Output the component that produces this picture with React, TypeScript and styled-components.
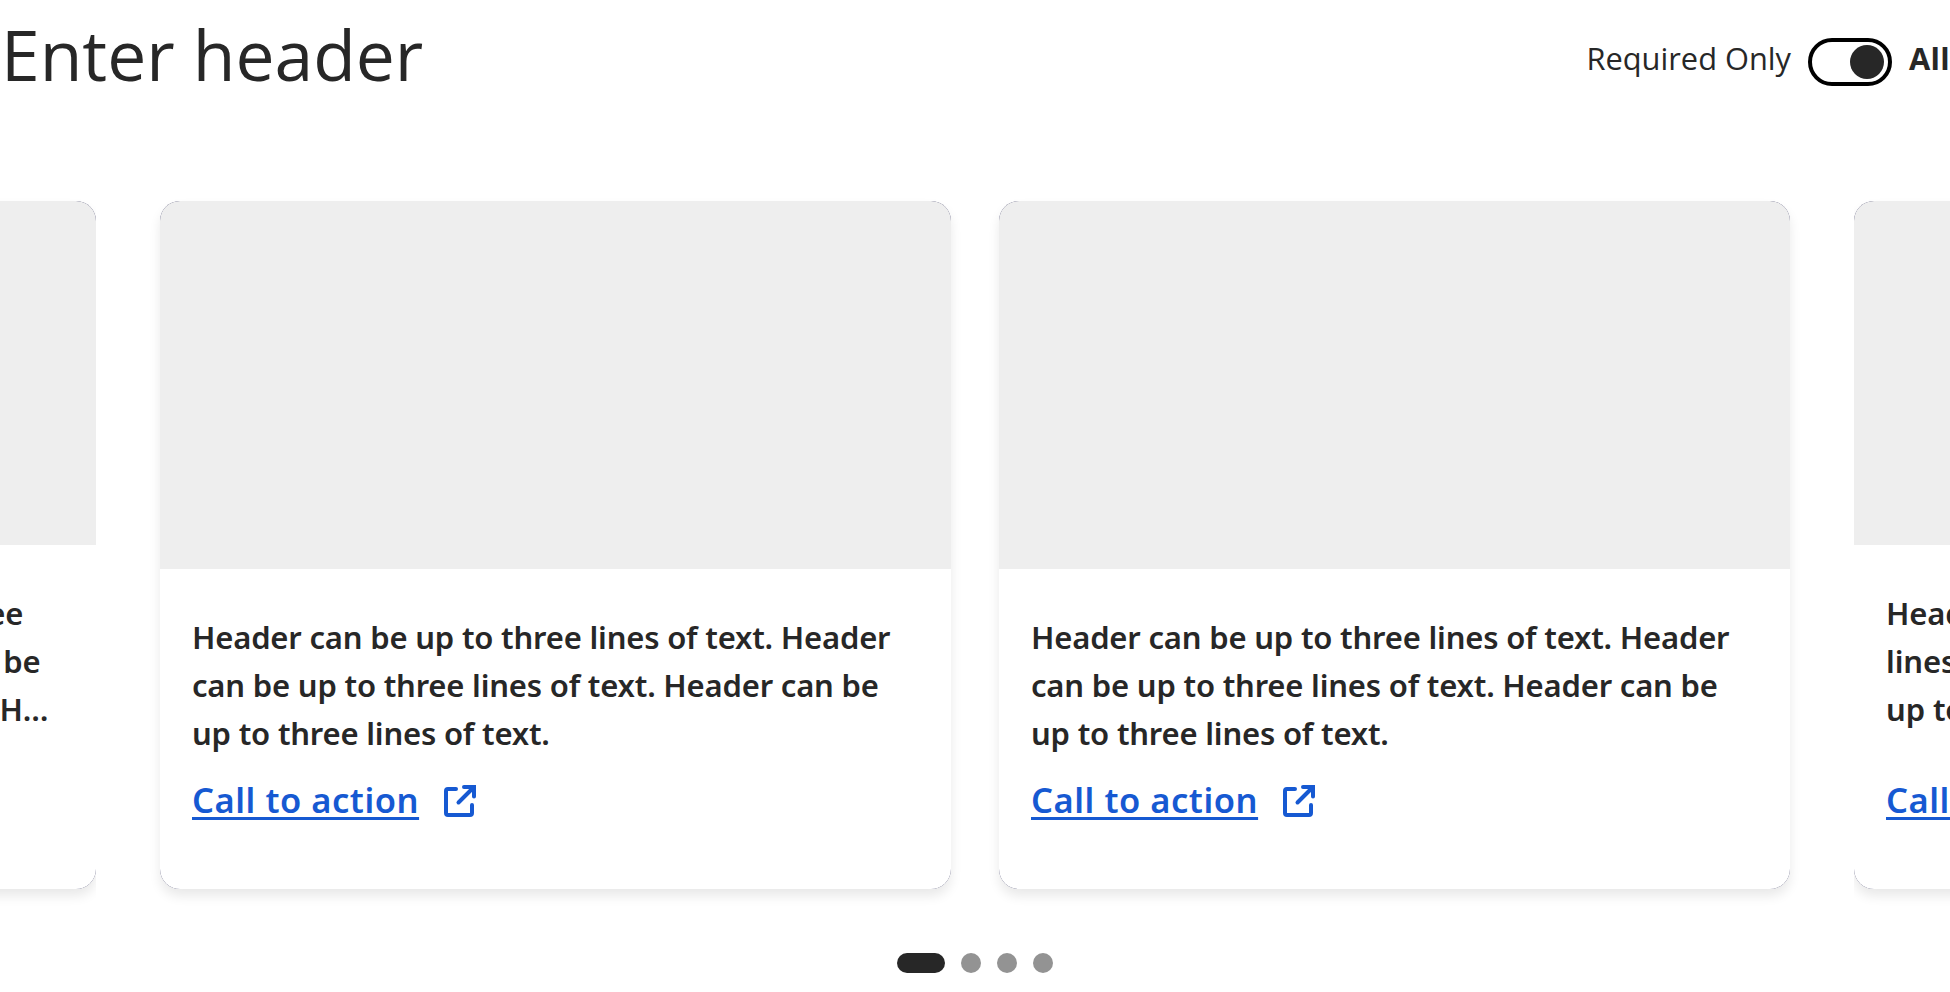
import styled, { createGlobalStyle } from 'styled-components';

type CardData = {
  id: number;
  lines: string[];
  peek?: boolean;
};

const fullLines = [
  'Header can be up to three lines of text. Header',
  'can be up to three lines of text. Header can be',
  'up to three lines of text.',
];

const peekLines = [
  'Header can be up to three',
  'lines of text. Header can be',
  'up to three lines of text. H…',
];

const cards: CardData[] = [
  { id: 1, lines: peekLines, peek: true },
  { id: 2, lines: fullLines },
  { id: 3, lines: fullLines },
  { id: 4, lines: peekLines, peek: true },
];

const ExternalIcon = () => (
  <IconSvg viewBox="0 0 32 32" fill="none" stroke="currentColor" strokeWidth="4" strokeLinecap="round">
    <path d="M12 4H4A2 2 0 0 0 2 6V28A2 2 0 0 0 4 30H26A2 2 0 0 0 28 28V20" />
    <path d="M20 2H30V11.5" />
    <path d="M14.5 17.5L29 3" />
  </IconSvg>
);

const App = () => {
  return (
    <Page>
      <GlobalStyle />
      <Header>
        <Title>Enter header</Title>
        <Filter>
          <FilterLabel>Required Only</FilterLabel>
          <Toggle role="switch" aria-checked="true">
            <Knob />
          </Toggle>
          <FilterLabel $active>All</FilterLabel>
        </Filter>
      </Header>
      <Track>
        {cards.map((card) => (
          <Slide key={card.id} $peek={card.peek}>
            <Card>
              <Media $peek={card.peek} />
              <Body>
                <CardTitle $peek={card.peek}>
                  {card.lines.map((line) => (
                    <TitleLine key={line}>{line}</TitleLine>
                  ))}
                </CardTitle>
                <Action href="#">
                  <ActionText>Call to action</ActionText>
                  <ExternalIcon />
                </Action>
              </Body>
            </Card>
          </Slide>
        ))}
      </Track>
      <Dots>
        <Dot $active />
        <Dot />
        <Dot />
        <Dot />
      </Dots>
    </Page>
  );
};

const GlobalStyle = createGlobalStyle`
  * {
    box-sizing: border-box;
  }

  body {
    margin: 0;
    background: #fff;
    color: #272727;
    font-family: 'Open Sans', 'Noto Sans', sans-serif;
  }
`;

const Page = styled.main`
  height: 992px;
  overflow: hidden;
`;

const Header = styled.header`
  display: flex;
  justify-content: space-between;
  align-items: flex-start;
  height: 201px;
  padding: 6px 0 0 1px;
`;

const Title = styled.h1`
  margin: 0;
  font-size: 69.6px;
  font-weight: 400;
  line-height: 96px;
`;

const Filter = styled.div`
  display: flex;
  align-items: flex-start;
  gap: 17px;
  padding-top: 28px;
`;

const FilterLabel = styled.span<{ $active?: boolean }>`
  font-size: 30.8px;
  font-weight: ${({ $active }) => ($active ? 700 : 400)};
  letter-spacing: ${({ $active }) => ($active ? '0.3px' : '0')};
  line-height: 48px;
  white-space: nowrap;
`;

const Toggle = styled.button`
  display: flex;
  justify-content: flex-end;
  align-items: center;
  width: 84px;
  height: 48px;
  margin-top: 4px;
  padding: 0 4px;
  border: 4px solid #000;
  border-radius: 24px;
  background: #fff;
`;

const Knob = styled.span`
  width: 34px;
  height: 34px;
  border-radius: 50%;
  background: #272727;
`;

const Track = styled.section`
  display: flex;
  gap: 48px;
  height: 688px;
  margin-left: -400px;
`;

/* the peeking slides cut their shadow off at the sides */
const Slide = styled.div<{ $peek?: boolean }>`
  flex: none;
  width: ${({ $peek }) => ($peek ? '496px' : '791px')};
  clip-path: ${({ $peek }) => ($peek ? 'inset(-20px 0 -30px 0)' : 'none')};

  &:first-child {
    margin-right: 16px;
  }

  &:last-child {
    margin-left: 16px;
  }
`;

const Card = styled.article`
  display: flex;
  flex-direction: column;
  height: 100%;
  border-radius: 20px;
  background: #34345e;
  box-shadow: 0 7px 12px rgba(0, 0, 0, 0.09);
`;

const Media = styled.div<{ $peek?: boolean }>`
  flex: none;
  height: ${({ $peek }) => ($peek ? '344px' : '368px')};
  border-radius: 20px 20px 0 0;
  background: #eee;
`;

const Body = styled.div`
  display: flex;
  flex: 1;
  flex-direction: column;
  justify-content: space-between;
  align-items: flex-start;
  padding: 44px 32px 65px;
  border-radius: 0 0 20px 20px;
  background: #fff;
  font-family: 'Noto Sans', 'Open Sans', sans-serif;
`;

const CardTitle = styled.h2<{ $peek?: boolean }>`
  margin: 0;
  font-size: 31px;
  font-weight: 600;
  letter-spacing: ${({ $peek }) => ($peek ? '-0.12px' : '-0.19px')};
  line-height: 48px;
  white-space: nowrap;
`;

const TitleLine = styled.span`
  display: block;
`;

const Action = styled.a`
  display: flex;
  color: #1659d2;
  text-decoration: none;
`;

const ActionText = styled.span`
  width: 227px;
  font-size: 34.5px;
  font-weight: 600;
  letter-spacing: 0.54px;
  line-height: 48px;
  text-decoration: underline;
  text-decoration-thickness: 3px;
  text-decoration-skip-ink: none;
  text-underline-offset: 4px;
  white-space: nowrap;
`;

const IconSvg = styled.svg`
  width: 32px;
  height: 32px;
  margin: 9px 0 0 25px;
`;

const Dots = styled.div`
  display: flex;
  justify-content: center;
  gap: 16px;
  margin-top: 64px;
`;

const Dot = styled.span<{ $active?: boolean }>`
  width: ${({ $active }) => ($active ? '48px' : '20px')};
  height: 20px;
  border-radius: 10px;
  background: ${({ $active }) => ($active ? '#272727' : '#939393')};
`;

export default App;
